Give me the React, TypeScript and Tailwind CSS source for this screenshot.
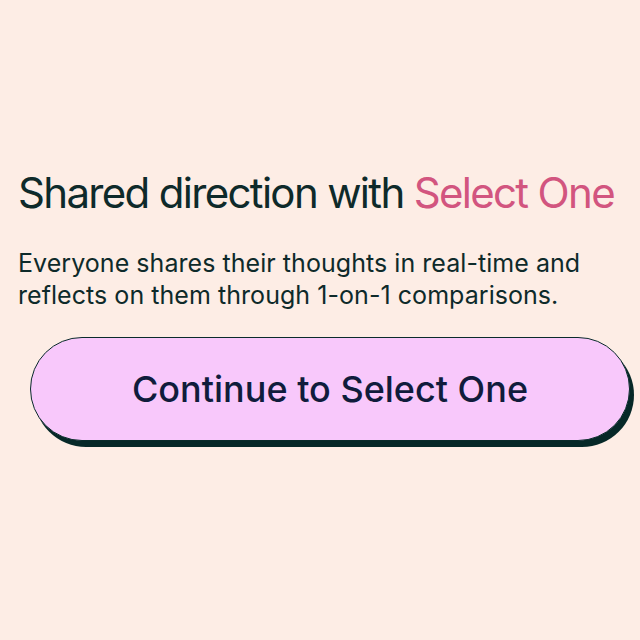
export default function App() {
  return (
    <div
      className="min-h-screen bg-[#fdede5] pt-[169px] pl-[18px] pr-[6px]"
      style={{ fontFamily: "Inter, 'Noto Sans', sans-serif" }}
    >
      <h1 className="text-[42px] leading-[48px] tracking-[-0.04em] text-[#0e2a2a] font-normal whitespace-nowrap">
        Shared direction with <span className="text-[#d2557f]">Select One</span>
      </h1>
      <p className="mt-[30px] max-w-[590px] text-[25px] leading-[32px] tracking-[0.002em] text-[#0e2a2a]">
        Everyone shares their thoughts in real-time and reflects on them through 1-on-1 comparisons.
      </p>
      <div className="pl-[12px] pr-[4px] mt-[26px]">
        <button className="w-full h-[104px] rounded-full bg-[#f8c8fb] border border-[#0a2b2b] shadow-[4px_6px_0_0_#062828] text-[36px] font-medium text-[#101c3c]">
          Continue to Select One
        </button>
      </div>
    </div>
  );
}
